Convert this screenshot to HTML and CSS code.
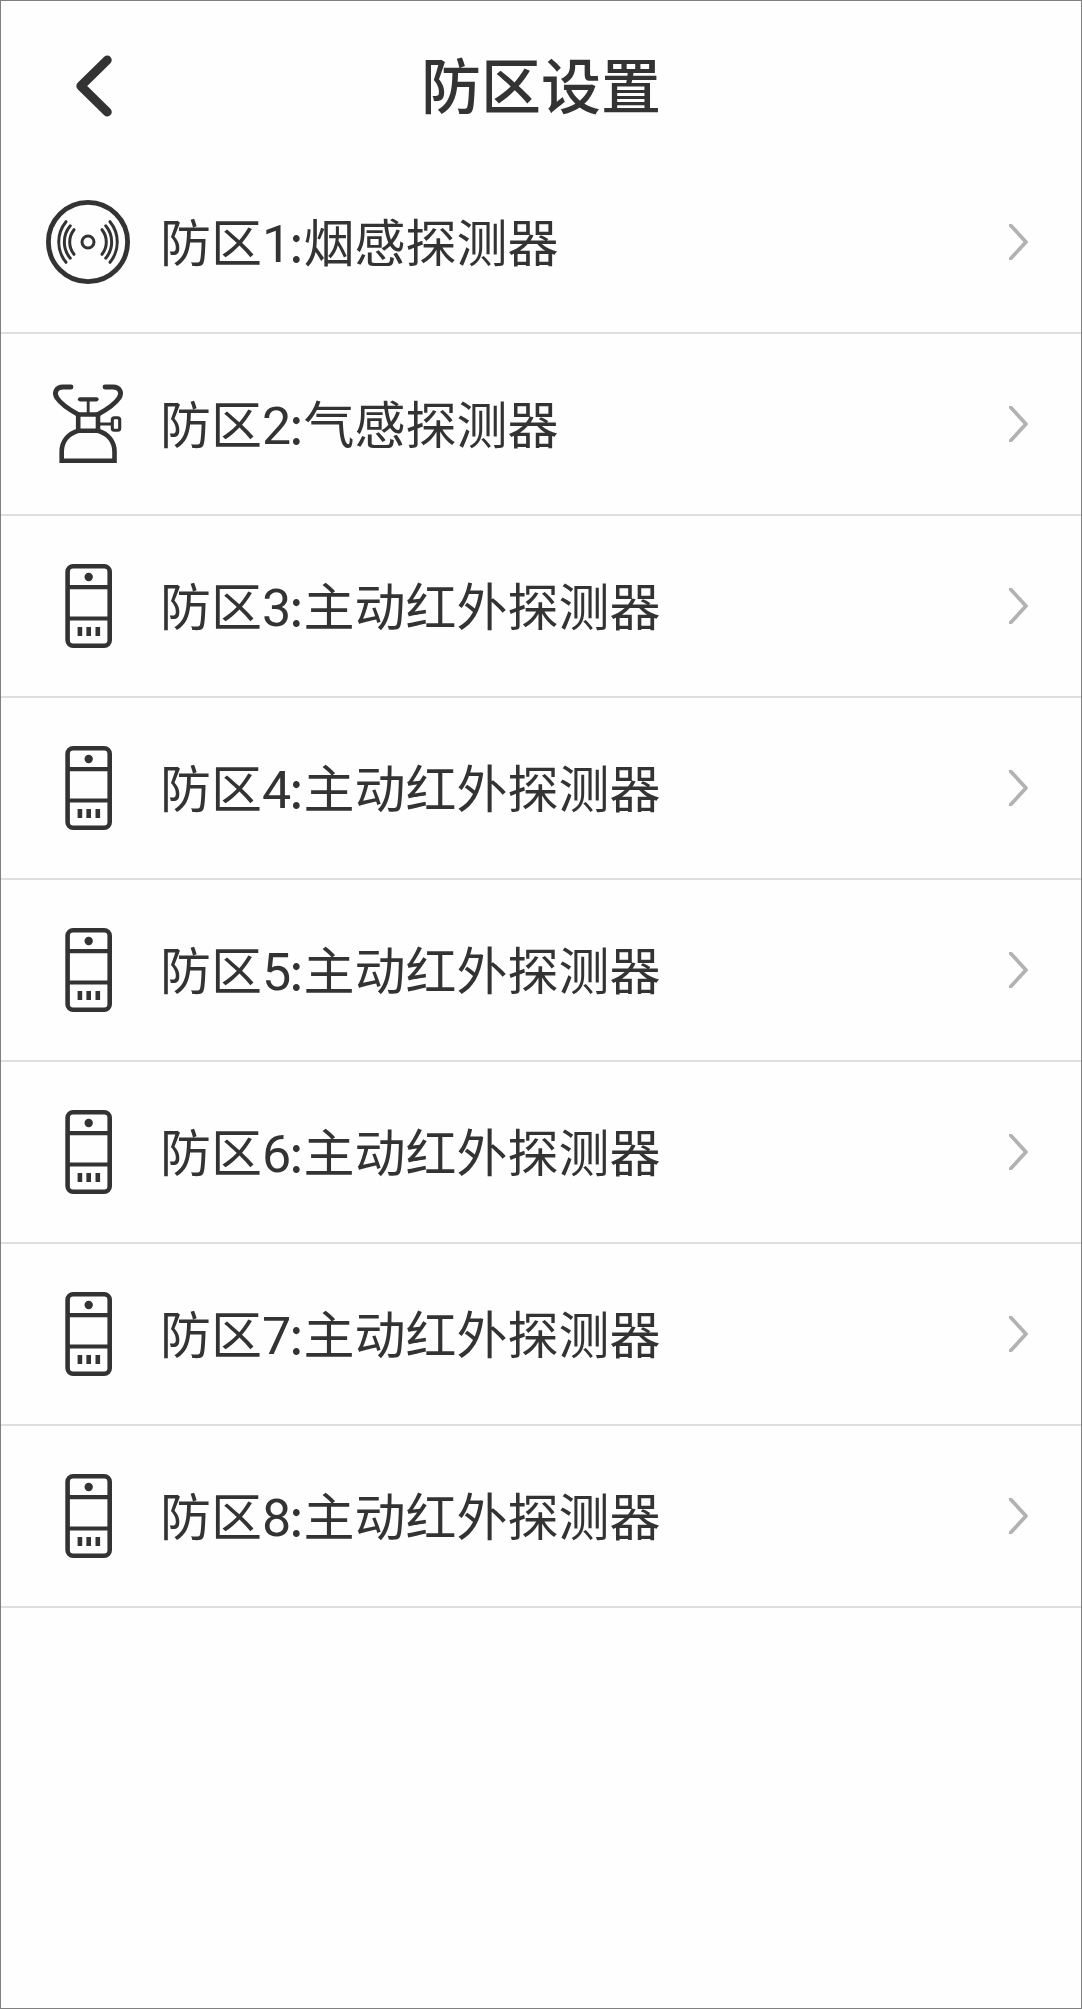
FILE: index.html
```
<!DOCTYPE html>
<html lang="zh-CN">
<head>
<meta charset="utf-8">
<title>防区设置</title>
<link rel="stylesheet" href="styles.css">
</head>
<body>
<svg class="sprite" aria-hidden="true">
  <symbol id="smoke" viewBox="0 0 84 84">
    <circle cx="42" cy="42" r="39.6" stroke-width="4.8"/>
    <circle cx="42" cy="42" r="6" stroke-width="3"/>
    <path stroke-width="3" d="M20 21.7A32 32 0 0 0 20 62.3M24.3 25.8A25 25 0 0 0 24.3 58.2M28 29.7A19.7 19.7 0 0 0 28 54.3M64 21.7A32 32 0 0 1 64 62.3M59.7 25.8A25 25 0 0 1 59.7 58.2M56 29.7A19.7 19.7 0 0 1 56 54.3"/>
  </symbol>
  <symbol id="gas" viewBox="0 0 84 84">
    <path stroke-width="4.8" d="M25 5H17C10 5 7.5 11 11 16C15 22 24 28 32 32.3M59 5H67C74 5 76.500 11 73 16C69 22 60 28 52 32.3"/>
    <path stroke-width="4.600" stroke-linejoin="miter" d="M32.200 32.500H52V48.700H32.200Z"/>
    <path stroke-width="4.600" stroke-linejoin="miter" d="M32.300 48.700C22 51.500 15.700 59.500 15.700 69.500V78.800H68.500V69.500C68.500 59.500 62 51.500 52 48.700"/>
    <path stroke-width="4.200" d="M34 17.300H50.500"/>
    <path stroke-width="2.900" d="M42.200 18V32M53 42H65"/>
    <rect x="66.300" y="35.800" width="7.400" height="12.400" rx="2" stroke-width="3.100"/>
  </symbol>
  <symbol id="infrared" viewBox="0 0 84 84">
    <rect x="21.600" y="2.300" width="42.100" height="79.400" rx="5.500" stroke-width="4.600"/>
    <path stroke-width="4.200" d="M22 23.200H64M22 54.500H64"/>
    <circle class="solid" cx="42.700" cy="13" r="4.200"/>
    <path stroke-width="4.600" stroke-linecap="butt" d="M33.900 63V72M42.700 63V72M51.800 63V72"/>
  </symbol>
  <symbol id="next" viewBox="0 0 19 36">
    <path d="M-1 -1.500L17 18L-1 37.500"/>
  </symbol>
</svg>
<main class="screen">
  <header class="header">
    <a class="back" aria-label="返回"><svg viewBox="0 0 36 62"><path d="M31.300 5L4.800 31L31.300 57"/></svg></a>
    <h1 class="title">防区设置</h1>
  </header>
  <ul class="zones">
    <li class="zone"><svg class="icon"><use href="#smoke"/></svg><span class="name">防区<span class="num">1</span>:烟感探测器</span><svg class="arrow"><use href="#next"/></svg></li>
    <li class="zone"><svg class="icon"><use href="#gas"/></svg><span class="name">防区<span class="num">2</span>:气感探测器</span><svg class="arrow"><use href="#next"/></svg></li>
    <li class="zone"><svg class="icon"><use href="#infrared"/></svg><span class="name">防区<span class="num">3</span>:主动红外探测器</span><svg class="arrow"><use href="#next"/></svg></li>
    <li class="zone"><svg class="icon"><use href="#infrared"/></svg><span class="name">防区<span class="num">4</span>:主动红外探测器</span><svg class="arrow"><use href="#next"/></svg></li>
    <li class="zone"><svg class="icon"><use href="#infrared"/></svg><span class="name">防区<span class="num">5</span>:主动红外探测器</span><svg class="arrow"><use href="#next"/></svg></li>
    <li class="zone"><svg class="icon"><use href="#infrared"/></svg><span class="name">防区<span class="num">6</span>:主动红外探测器</span><svg class="arrow"><use href="#next"/></svg></li>
    <li class="zone"><svg class="icon"><use href="#infrared"/></svg><span class="name">防区<span class="num">7</span>:主动红外探测器</span><svg class="arrow"><use href="#next"/></svg></li>
    <li class="zone"><svg class="icon"><use href="#infrared"/></svg><span class="name">防区<span class="num">8</span>:主动红外探测器</span><svg class="arrow"><use href="#next"/></svg></li>
  </ul>
</main>
</body>
</html>
```
FILE: styles.css
```
* { box-sizing: border-box; }
body {
  margin: 0;
  background: #fff;
  color: #333;
  font-family: "Noto Sans CJK SC", sans-serif;
}
.sprite { display: none; }
svg {
  fill: none;
  stroke: #333;
  stroke-linecap: round;
  stroke-linejoin: round;
}
.solid { fill: #333; stroke: none; }
.screen {
  height: 2009px;
  border: 1px solid #808080;
  background: #fefefe;
}
.header {
  display: grid;
  grid-template-columns: 111px 1fr 111px;
  align-items: center;
  height: 151px;
  padding-top: 19px;
}
.back { display: flex; padding-left: 75px; }
.back svg { width: 36px; height: 62px; stroke-width: 8.9; }
.title {
  margin: 0;
  padding-bottom: 6px;
  text-align: center;
  font-size: 60px;
  font-weight: 500;
  line-height: 90px;
}
.zones { margin: 0; padding: 0; list-style: none; }
.zone {
  display: flex;
  align-items: center;
  height: 182px;
  padding: 0 53px 0 45px;
  border-bottom: 2px solid #dfdfdf;
}
.icon { width: 84px; height: 84px; flex: none; }
.name {
  flex: 1;
  margin-left: 30px;
  padding-bottom: 4px;
  font-size: 51px;
  line-height: 76px;
  white-space: nowrap;
}
.num {
  font-family: Roboto, sans-serif;
  font-size: 52px;
  line-height: 0;
  letter-spacing: -2px;
}
.arrow { width: 19px; height: 36px; flex: none; stroke: #b2b2b2; stroke-width: 3.7; }
```
